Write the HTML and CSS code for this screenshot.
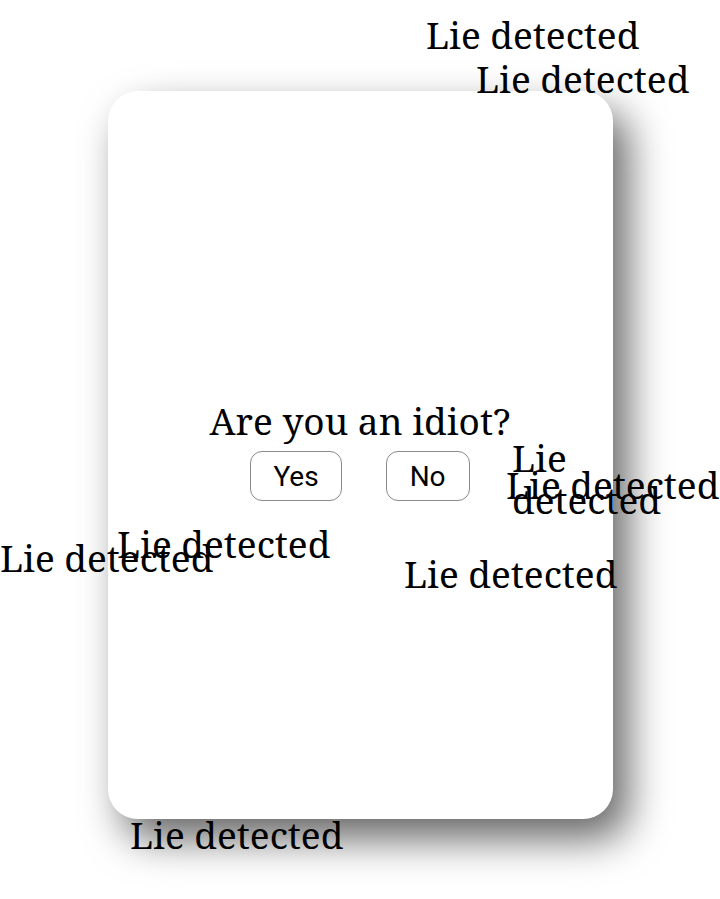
FILE: index.html
```html
<!DOCTYPE html>
<html>
<head>
<meta charset="utf-8">
<title>Are you an idiot?</title>
<link rel="stylesheet" href="styles.css">
</head>
<body>
<div class="card">
  <h1 class="question">Are you an idiot?</h1>
  <div class="actions">
    <button class="btn">Yes</button>
    <button class="btn">No</button>
  </div>
</div>
<div class="lie" style="left:426px;top:14px">Lie detected</div>
<div class="lie" style="left:476px;top:58px">Lie detected</div>
<div class="lie" style="left:512px;top:437px">Lie detected</div>
<div class="lie" style="left:506px;top:464px">Lie detected</div>
<div class="lie" style="left:0px;top:537px">Lie detected</div>
<div class="lie" style="left:117px;top:523px">Lie detected</div>
<div class="lie" style="left:404px;top:553px">Lie detected</div>
<div class="lie" style="left:130px;top:814px">Lie detected</div>
</body>
</html>
```
FILE: styles.css
```css
html, body {
  margin: 0;
  padding: 0;
  background: #ffffff;
}
body {
  width: 720px;
  height: 899px;
  overflow: hidden;
  font-family: "Noto Serif", "DejaVu Serif", serif;
}
.card {
  box-sizing: border-box;
  width: 505px;
  height: 728px;
  margin: 91px auto 0;
  padding-bottom: 9px;
  background: #ffffff;
  border-radius: 30px;
  box-shadow: 15px 20px 40px rgba(0, 0, 0, 0.6);
  display: flex;
  flex-direction: column;
  align-items: center;
  justify-content: center;
}
.question {
  margin: 0;
  font-weight: normal;
  font-size: 37px;
  line-height: 42px;
  color: #000;
}
.actions {
  display: flex;
  gap: 44px;
  margin-top: 9px;
}
.btn {
  box-sizing: border-box;
  min-width: 84px;
  font-family: Roboto, sans-serif;
  font-size: 28px;
  height: 50px;
  padding: 0 22px;
  background: #fff;
  color: #000;
  border: 1px solid #8a8a8a;
  border-radius: 12px;
}
.lie {
  position: absolute;
  font-size: 37px;
  line-height: 42px;
  color: #000;
}
```
